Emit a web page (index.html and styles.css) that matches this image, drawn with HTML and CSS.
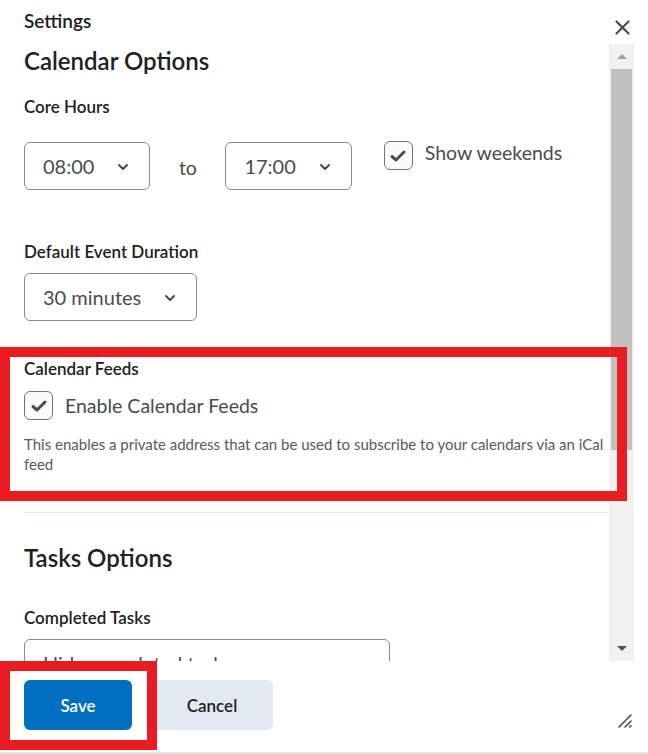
FILE: index.html
```html
<!DOCTYPE html>
<html>
<head>
  <meta charset="UTF-8">
  <title>Settings</title>
  <link rel="stylesheet" href="styles.css">
</head>
<body>

<div class="dialog">

  <!-- Header -->
  <div class="header">
    <div class="title">Settings</div>
    <button class="close" aria-label="Close">
      <svg width="15" height="15" viewBox="0 0 15 15"><path d="M1.5 1.5 L13.5 13.5 M13.5 1.5 L1.5 13.5" stroke="#494c4e" stroke-width="2.2" stroke-linecap="round"/></svg>
    </button>
  </div>

  <!-- Scrolling body -->
  <div class="main">
    <div class="content">
      <h2 class="heading first">Calendar Options</h2>

      <div class="label core">Core Hours</div>
      <div class="hours-row">
        <div class="select">
          <span>08:00</span>
          <svg class="chev" width="12" height="8" viewBox="0 0 12 8"><path d="M2 2 L6 6 L10 2" fill="none" stroke="#494c4e" stroke-width="2" stroke-linecap="round" stroke-linejoin="round"/></svg>
        </div>
        <span class="to">to</span>
        <div class="select">
          <span>17:00</span>
          <svg class="chev" width="12" height="8" viewBox="0 0 12 8"><path d="M2 2 L6 6 L10 2" fill="none" stroke="#494c4e" stroke-width="2" stroke-linecap="round" stroke-linejoin="round"/></svg>
        </div>
        <label class="check weekends">
          <span class="box">
            <svg width="18" height="14" viewBox="0 0 18 14"><path d="M3 7.5 L7 11 L15 3" fill="none" stroke="#494c4e" stroke-width="3" stroke-linecap="round" stroke-linejoin="round"/></svg>
          </span>
          <span>Show weekends</span>
        </label>
      </div>

      <div class="label duration">Default Event Duration</div>
      <div class="select">
        <span>30 minutes</span>
        <svg class="chev" width="12" height="8" viewBox="0 0 12 8"><path d="M2 2 L6 6 L10 2" fill="none" stroke="#494c4e" stroke-width="2" stroke-linecap="round" stroke-linejoin="round"/></svg>
      </div>

      <div class="label feeds">Calendar Feeds</div>
      <label class="check">
        <span class="box">
          <svg width="18" height="14" viewBox="0 0 18 14"><path d="M3 7.5 L7 11 L15 3" fill="none" stroke="#494c4e" stroke-width="3" stroke-linecap="round" stroke-linejoin="round"/></svg>
        </span>
        <span>Enable Calendar Feeds</span>
      </label>
      <p class="desc">This enables a private address that can be used to subscribe to your calendars via an iCal feed</p>

      <hr class="sep">

      <h2 class="heading">Tasks Options</h2>
      <div class="label completed">Completed Tasks</div>
      <div class="select wide">
        <span>Hide completed tasks</span>
        <svg class="chev" width="12" height="8" viewBox="0 0 12 8"><path d="M2 2 L6 6 L10 2" fill="none" stroke="#494c4e" stroke-width="2" stroke-linecap="round" stroke-linejoin="round"/></svg>
      </div>
    </div>

    <!-- Scrollbar -->
    <div class="scrollbar">
      <div class="arrow up"></div>
      <div class="thumb"></div>
      <div class="arrow down"></div>
    </div>
  </div>

  <!-- Footer -->
  <div class="footer">
    <button class="btn primary">Save</button>
    <button class="btn">Cancel</button>
    <svg class="grip" width="16" height="16" viewBox="0 0 16 16"><path d="M2 14 L14 2 M8 14 L14 8 M12.5 14 L14 12.5" stroke="#494c4e" stroke-width="1.6" stroke-linecap="round"/></svg>
  </div>

  <!-- Red annotation boxes -->
  <div class="mark mark-feeds"></div>
  <div class="mark mark-save"></div>
</div>

</body>
</html>
```

FILE: styles.css
```css
* {
  box-sizing: border-box;
}

body {
  margin: 0;
  font-family: Lato, "Open Sans", sans-serif;
  color: #202122;
  background: #fff;
}

.dialog {
  position: relative;
  width: 648px;
  height: 754px;
  display: flex;
  flex-direction: column;
  overflow: hidden;
  border-bottom: 2px solid #dfe3e8;
}

/* Header */
.header {
  height: 44px;
  display: flex;
  justify-content: space-between;
  align-items: flex-start;
  padding-left: 24px;
}

.title {
  font-size: 19px;
  font-weight: 600;
  line-height: 22px;
  padding-top: 10px;
}

.close {
  border: none;
  background: none;
  padding: 0;
  margin: 20px 18px 0 0;
  width: 15px;
  height: 15px;
  display: flex;
}

/* Body */
.main {
  height: 617px;
  display: flex;
  overflow: hidden;
}

.content {
  width: 609px;
  padding: 0 1px 0 24px;
  overflow: hidden;
}

.heading {
  margin: 31px 0 0;
  font-size: 24px;
  font-weight: 600;
  line-height: 28px;
}

.heading.first {
  margin-top: 3px;
}

.label {
  font-size: 17px;
  font-weight: 600;
  line-height: 20px;
}

.label.core { margin: 22px 0 25px; }
.label.duration { margin: 50px 0 11px; }
.label.feeds { margin: 38px 0 12px; }
.label.completed { margin: 36px 0 11px; }

.hours-row {
  display: flex;
  align-items: flex-start;
}

.select {
  height: 48px;
  display: inline-flex;
  align-items: center;
  gap: 23px;
  padding: 0 20px 0 18px;
  border: 1px solid #868c8f;
  border-radius: 6px;
  font-size: 20px;
  color: #494c4e;
  background: #fff;
}

.select.wide {
  width: 366px;
  justify-content: space-between;
}

.chev {
  flex-shrink: 0;
  margin-top: 2px;
}

.to {
  width: 75px;
  text-align: center;
  font-size: 19.5px;
  color: #494c4e;
  line-height: 48px;
  margin-top: 2px;
}

.check {
  display: flex;
  align-items: center;
  gap: 12px;
  font-size: 19.5px;
  color: #494c4e;
}

.check.weekends {
  margin: -1px 0 0 32px;
  align-items: flex-start;
}

.check.weekends span:last-child {
  line-height: 24px;
}

.box {
  width: 29px;
  height: 29px;
  flex-shrink: 0;
  border: 1px solid #6e7376;
  border-radius: 6px;
  background: #f9fbff;
  display: flex;
  align-items: center;
  justify-content: center;
}

.desc {
  margin: 14px 0 0;
  font-size: 15px;
  line-height: 20px;
  color: #565a5c;
}

.sep {
  margin: 38px 0 0;
  border: none;
  border-top: 1px solid #e3e9f1;
}

/* Fake scrollbar */
.scrollbar {
  width: 25px;
  height: 618px;
  background: #f1f1f1;
  display: flex;
  flex-direction: column;
  align-items: center;
}

.arrow {
  width: 25px;
  height: 25px;
  flex-shrink: 0;
  display: flex;
  align-items: center;
  justify-content: center;
}

.arrow::before {
  content: "";
  border-left: 5px solid transparent;
  border-right: 5px solid transparent;
}

.arrow.up::before {
  border-bottom: 5px solid #a3a3a3;
}

.arrow.down {
  margin-top: auto;
  height: 28px;
}

.arrow.down::before {
  border-top: 5px solid #505050;
}

.thumb {
  width: 21px;
  height: 381px;
  background: #c1c1c1;
}

/* Footer */
.footer {
  flex: 1;
  display: flex;
  align-items: flex-start;
  gap: 19px;
  padding: 19px 0 0 24px;
  position: relative;
}

.btn {
  height: 50px;
  width: 122px;
  border: none;
  border-radius: 6px;
  background: #e3e9f1;
  color: #202122;
  font-family: Lato, sans-serif;
  font-size: 17px;
  font-weight: 600;
}

.btn.primary {
  width: 108px;
  background: #006fbf;
  color: #fff;
}

.grip {
  margin: 33px 0 0 auto;
  margin-right: 15px;
}

/* Red highlight boxes */
.mark {
  position: absolute;
  border: 10px solid #e81c22;
}

.mark-feeds {
  left: 0;
  top: 347px;
  width: 627px;
  height: 154px;
}

.mark-save {
  left: 0;
  top: 661px;
  width: 157px;
  height: 89px;
}
```
